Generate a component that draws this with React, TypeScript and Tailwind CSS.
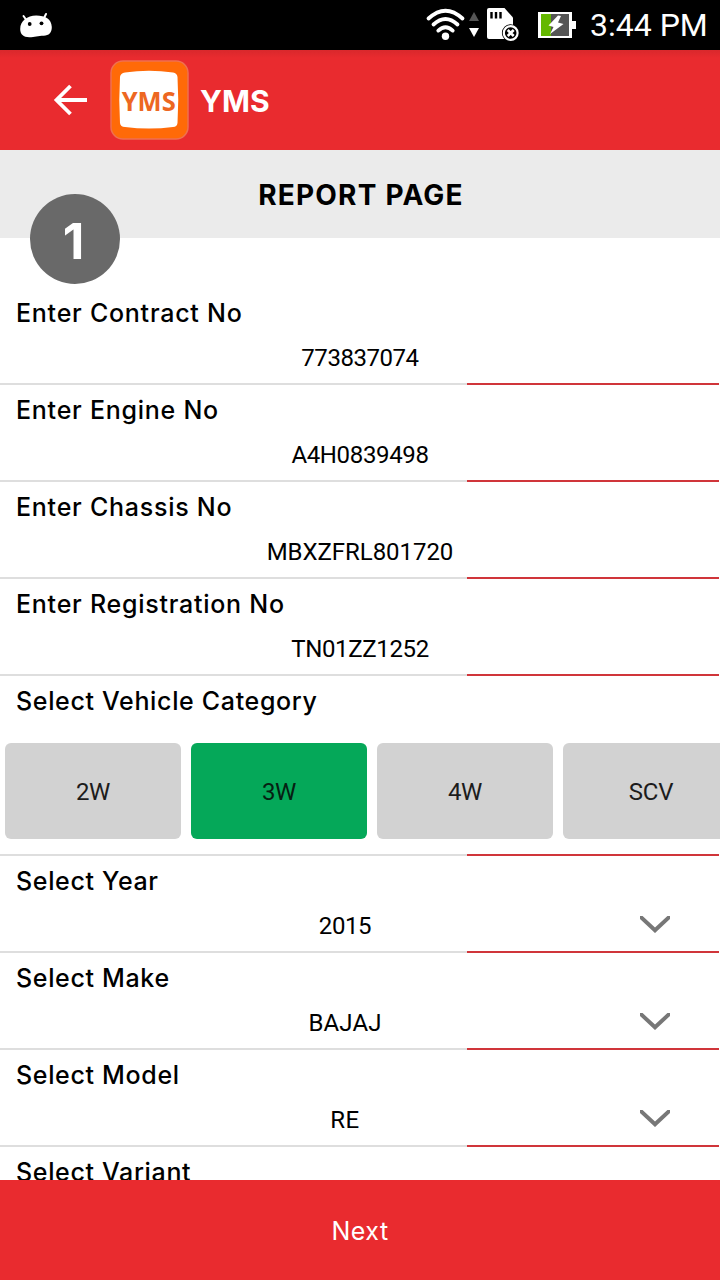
import React from "react";

type FieldProps = { label: string; value: string; select?: boolean; spacing?: string };

function Divider() {
  return (
    <div className="flex h-0.5 shrink-0">
      <div className="w-[467px] bg-[#dedede]" />
      <div className="w-[252px] bg-[#d0353a]" />
    </div>
  );
}

function Label({ children, wide }: { children: React.ReactNode; wide?: boolean }) {
  return (
    <div
      className={`${wide ? "tracking-[0.75px]" : "tracking-[0.66px]"} pl-4 pt-[10px] pb-px font-[Inter,sans-serif] text-[25px] leading-[30px] font-medium whitespace-nowrap`}
    >
      {children}
    </div>
  );
}

function Field({ label, value, select, spacing = "tracking-normal" }: FieldProps) {
  return (
    <div className="flex h-[97px] shrink-0 flex-col">
      <Label wide={!select}>{label}</Label>
      <div className="flex flex-1 items-center">
        <div className={select ? "w-[690px] pt-1 text-center" : "w-full pt-1 text-center"}>
          <span className={`${spacing} text-[24px] leading-[30px]`}>{value}</span>
        </div>
        {select && (
          <svg className="-ml-[50px] h-[17px] w-[30px] shrink-0" viewBox="0 0 30 17" fill="none" stroke="#777" strokeWidth="4">
            <path d="M-1 -.6 15 14.300 31 -.6" />
          </svg>
        )}
      </div>
      <Divider />
    </div>
  );
}

function StatusBar() {
  return (
    <header className="flex h-[50px] shrink-0 items-center bg-black pl-5 text-white">
      <svg className="h-[50px] w-8" viewBox="20 0 32 50" fill="#fff">
        <path d="M23.500 16 27 21M46 14 43.500 19" stroke="#fff" strokeWidth="2" strokeLinecap="round" />
        <path d="M20.200 29c0-8 7-13.500 16-13.500S51.500 19 51.800 27c.1 6-3 8.500-8 8.700-6 0-9 1.500-14.500 1.500-6 0-9.100-3-9.100-8.200Z" />
        <circle cx="29.700" cy="24" r="1.900" fill="#000" />
        <circle cx="41.500" cy="23.300" r="1.900" fill="#000" />
      </svg>
      <svg className="ml-[373px] h-[50px] w-[155px]" viewBox="425 0 155 50" fill="none">
        <g stroke="#fff" strokeWidth="3.800" strokeLinecap="round">
          <path d="M428.500 18.500Q445.500 2.800 462.500 18.500" />
          <path d="M433.500 24.500Q445.500 13.500 457.500 24.500" />
          <path d="M438.300 30.600Q445.500 24 452.700 30.600" />
        </g>
        <circle cx="445.500" cy="36.200" r="3.700" fill="#fff" />
        <path d="M474 12 479 21H469Z" fill="#555" />
        <path d="M469 28h10l-5 9Z" fill="#fff" />
        <path d="M489 8H504.500L513 17.500V39H489Q487 39 487 37V10Q487 8 489 8Z" fill="#fff" />
        <path d="M491.500 12v6.500M496 12v6.500M500.500 12v6.500" stroke="#000" strokeWidth="2.400" />
        <circle cx="510.700" cy="33" r="8.800" fill="#000" />
        <circle cx="510.700" cy="33" r="6.900" stroke="#fff" strokeWidth="2.200" />
        <path d="m507.700 30 6 6m0-6-6 6" stroke="#fff" strokeWidth="2.600" />
        <path d="M538 12h34v9h4v8h-4v9h-34Z" fill="#fff" />
        <path d="M541 14h10v22h-10Z" fill="#65b800" />
        <path d="M551 14h18v22h-18Z" fill="#555" />
        <path d="M558 15.500 548.500 25.500 553.500 27 550 34 563.500 24 558 22.500 561 16Z" fill="#fff" />
      </svg>
      <span className="ml-[10px] text-[32px] leading-[50px] whitespace-nowrap">3:44 PM</span>
    </header>
  );
}

function Logo() {
  return (
    <svg className="h-20 w-20" viewBox="0 0 80 80">
      <rect x="2" y="1" width="77" height="78" rx="12" fill="#ff6a08" stroke="#ef7050" strokeWidth="1.500" />
      <path d="M16 12.500Q40 9 64 12.500 68 13 68.500 17 70 40 68.500 63 68 67 64 67 40 70 16 67 11.500 67 11 63 9.500 40 11 17 11.500 13 16 12.500Z" fill="#fff" />
      <text x="39.700" y="50.500" textAnchor="middle" textLength="54" lengthAdjust="spacingAndGlyphs" fontFamily="Open Sans" fontWeight="700" fontSize="26" fill="#ed6722">
        YMS
      </text>
    </svg>
  );
}

const categories = ["2W", "3W", "4W", "SCV"];

export default function App() {
  return (
    <div className="flex h-[1280px] w-[720px] flex-col overflow-hidden bg-white font-[Roboto,sans-serif] text-black">
      <StatusBar />
      <div className="flex h-[100px] shrink-0 items-center bg-[#e92b2f] bg-linear-to-b from-[#d9282c] to-[#e92b2f] to-8% pl-[53px] text-white">
        <svg className="h-8 w-[34px]" viewBox="0 0 34 32" fill="none" stroke="#fff" strokeWidth="3.800">
          <path d="M34 16H3M17.500 2 3.500 16 17.500 30" />
        </svg>
        <div className="ml-[22px]"><Logo /></div>
        <h1 className="ml-[11px] pt-px font-[Inter,sans-serif] text-[30px] leading-9 font-bold tracking-[0.1px]">YMS</h1>
      </div>
      <div className="relative flex h-[88px] shrink-0 items-center justify-center bg-[#ebebeb] pt-[2px]">
        <h2 className="pl-[2px] font-[Inter,sans-serif] text-[28px] leading-9 font-bold tracking-[1.2px]">REPORT PAGE</h2>
        <div className="absolute left-[30px] top-[44px] flex size-[90px] items-center justify-center rounded-full bg-[#696969] pt-[4px] pr-[3px] font-[Inter,sans-serif] text-[50px] leading-none font-bold text-white">
          1
        </div>
      </div>
      <main className="flex min-h-0 flex-1 flex-col overflow-hidden pt-[50px]">
        <Field label="Enter Contract No" value="773837074" spacing="tracking-[-0.45px]" />
        <Field label="Enter Engine No" value="A4H0839498" spacing="tracking-[-0.35px]" />
        <Field label="Enter Chassis No" value="MBXZFRL801720" spacing="tracking-[-0.05px]" />
        <Field label="Enter Registration No" value="TN01ZZ1252" spacing="tracking-[-0.35px]" />
        <section className="flex h-[180px] shrink-0 flex-col">
          <Label>Select Vehicle Category</Label>
          <div className="mt-[26px] flex flex-1 gap-[10px] overflow-hidden pl-[5px]">
            {categories.map((name) => (
              <button
                key={name}
                className={
                  name === "3W"
                    ? "h-24 w-44 shrink-0 rounded-md bg-[#05a859] pt-[2px] text-[24px] tracking-[-0.3px] text-[#062012]"
                    : "h-24 w-44 shrink-0 rounded-md bg-[#d2d2d2] pt-[2px] text-[24px] tracking-[-0.3px] text-[#1c1c1c]"
                }
              >
                {name}
              </button>
            ))}
          </div>
          <Divider />
        </section>
        <Field label="Select Year" value="2015" select spacing="tracking-[-0.4px]" />
        <Field label="Select Make" value="BAJAJ" select spacing="tracking-[0.15px]" />
        <Field label="Select Model" value="RE" select spacing="tracking-[0.5px]" />
        <Label>Select Variant</Label>
      </main>
      <button className="h-[100px] shrink-0 bg-[#e92b2f] pt-[4px] font-[Inter,sans-serif] text-[25px] tracking-[0.5px] text-white">Next</button>
    </div>
  );
}
